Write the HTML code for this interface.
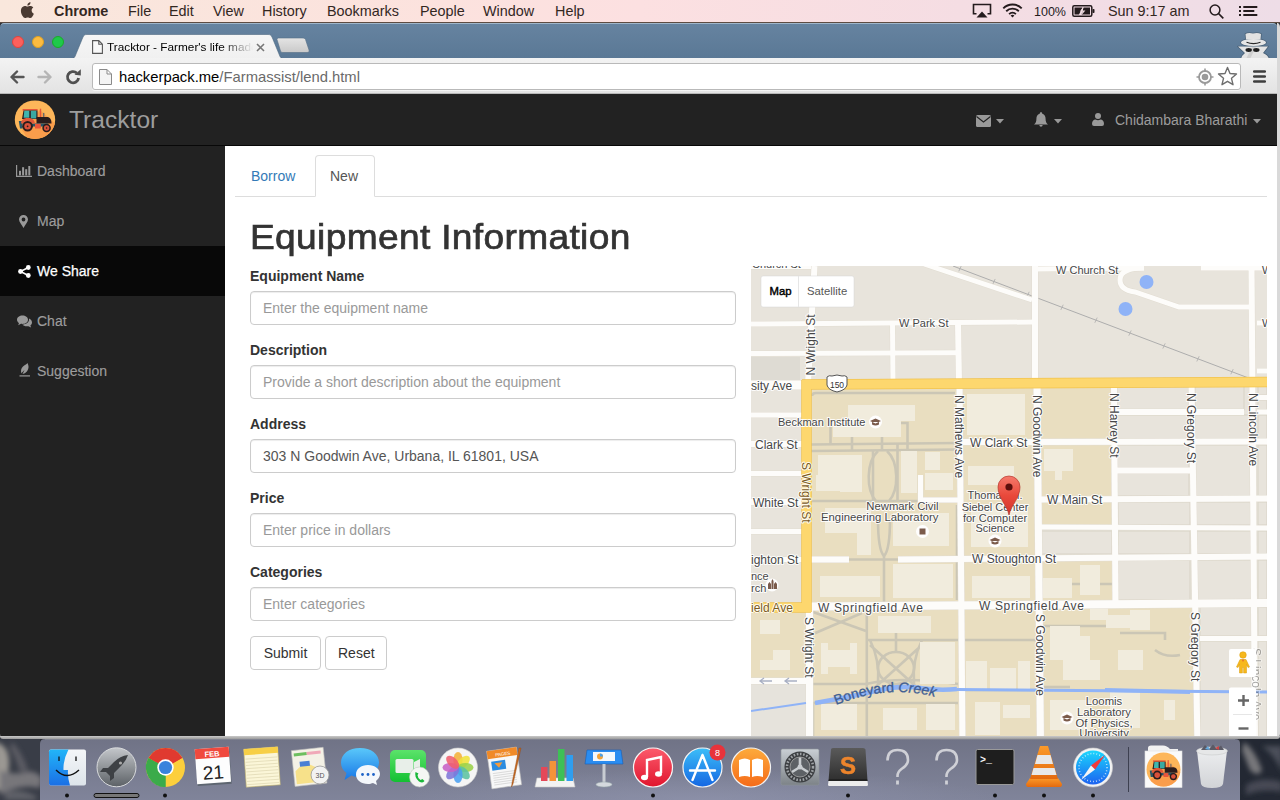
<!DOCTYPE html>
<html><head><meta charset="utf-8">
<style>
*{margin:0;padding:0;box-sizing:border-box}
html,body{width:1280px;height:800px;overflow:hidden;position:relative;font-family:"Liberation Sans",sans-serif}
body{background:#2b2f38}
.abs{position:absolute}
#desk{left:0;top:0;width:1280px;height:800px;background:
 radial-gradient(ellipse 30px 40px at 15px 770px,#8a8c90 0%,rgba(120,120,125,0) 100%),
 radial-gradient(ellipse 30px 30px at 1250px 760px,#5a5e66 0%,rgba(80,80,90,0) 100%),
 #2d3039}
#menubar{z-index:5;left:0;top:0;width:1280px;height:23px;background:linear-gradient(90deg,#f9e7dc 0%,#fce2de 35%,#fce0e1 50%,#f5dde3 75%,#eedde7 100%);border-bottom:1px solid #5e4c42}
.mb{position:absolute;top:3px;font-size:14.4px;line-height:16px;color:#33271f;white-space:nowrap}
#win{left:0;top:22px;width:1280px;height:717px;background:linear-gradient(90deg,#222 0,#222 1277px,#d9d9d9 1277px);border-radius:5px 5px 5px 5px;overflow:hidden}
#winbot{left:0;top:736px;width:1280px;height:3px;background:linear-gradient(#c9c9c9,#9c9c9c);border-radius:0 0 5px 5px}
#tabstrip{left:0;top:1px;width:1277px;height:36px;background:linear-gradient(#6683a0,#5a7895);border-top:1px solid #9fb6cb;border-radius:4px 4px 0 0}
#toolbar{left:0;top:36px;width:1277px;height:36px;background:linear-gradient(#f3f3f3,#e3e3e3);border-bottom:1px solid #b8b8b8}
#page{left:0;top:73px;width:1277px;height:641px;background:#fff;overflow:hidden}
.side{position:absolute;left:37px;font-size:14px;line-height:20px;color:#9d9d9d;white-space:nowrap;-webkit-text-stroke:0.15px #9d9d9d}
.lbl{position:absolute;left:250px;font-size:14px;line-height:20px;font-weight:bold;color:#333;white-space:nowrap}
.inp{position:absolute;left:250px;width:486px;height:34px;border:1px solid #ccc;border-radius:4px;padding:6px 12px;font-size:14px;line-height:20px;color:#555;white-space:nowrap;box-shadow:inset 0 1px 1px rgba(0,0,0,.075)}
.ph{color:#999}
.btn{position:absolute;top:541px;height:34px;border:1px solid #ccc;border-radius:4px;padding:6px 12px;font-size:14px;line-height:20px;color:#333;text-align:center;background:#fff}
</style></head><body>
<div id="desk" class="abs"></div>

<!-- MENU BAR -->
<div id="menubar" class="abs">
 <svg class="abs" style="left:20px;top:2px" width="14" height="16" viewBox="0 0 14 16"><path fill="#4a3a32" d="M11.6 8.5c0-2 1.6-2.9 1.7-3-1-1.4-2.4-1.6-2.9-1.6-1.2-.1-2.4.7-3 .7-.6 0-1.6-.7-2.6-.7C3.500 4 2.3 4.800 1.600 6c-1.4 2.400-.4 6 1 8 .7 1 1.500 2 2.500 2 1 0 1.400-.6 2.600-.6s1.500.6 2.600.6c1.100 0 1.800-1 2.400-2 .8-1.100 1.100-2.200 1.100-2.300 0 0-2.100-.8-2.200-3.200zM9.700 2.600C10.200 2 10.600 1.100 10.500.2 9.700.2 8.700.7 8.200 1.300c-.5.500-.9 1.400-.8 2.300.9.100 1.800-.4 2.300-1z"/></svg>
 <div class="mb" style="left:54px;font-weight:bold">Chrome</div>
 <div class="mb" style="left:128px">File</div>
 <div class="mb" style="left:169px">Edit</div>
 <div class="mb" style="left:213px">View</div>
 <div class="mb" style="left:262px">History</div>
 <div class="mb" style="left:327px">Bookmarks</div>
 <div class="mb" style="left:420px">People</div>
 <div class="mb" style="left:483px">Window</div>
 <div class="mb" style="left:555px">Help</div>
 <svg class="abs" style="left:972px;top:3px" width="20" height="16" viewBox="0 0 20 16"><path d="M4.5 10.8 H1.5 V1.5 H18.5 V10.8 H15.5" fill="none" stroke="#241b1d" stroke-width="1.6"/><path d="M4.5 14.5 L10 8.6 L15.5 14.5 Z" fill="#241b1d"/></svg>
 <svg class="abs" style="left:1002px;top:3px" width="21" height="15" viewBox="0 0 21 15"><path d="M1.3 5.3 A13 13 0 0 1 19.7 5.3 M4.2 8.2 A9 9 0 0 1 16.8 8.2 M7.1 11.1 A5 5 0 0 1 13.9 11.1" fill="none" stroke="#241b1d" stroke-width="1.9"/><path d="M10.5 14.5 L8.6 12.6 A2.7 2.7 0 0 1 12.4 12.6 Z" fill="#241b1d"/></svg>
 <div class="mb" style="left:1034px;top:4px;font-size:12.5px;color:#241b1d">100%</div>
 <svg class="abs" style="left:1072px;top:5px" width="23" height="12" viewBox="0 0 23 12"><rect x="0.8" y="0.8" width="19" height="10.4" rx="1.5" fill="none" stroke="#241b1d" stroke-width="1.5"/><path d="M2.5 2.5 H10.5 L7 9.5 H2.5 Z M11.5 2.5 H18 V9.5 H9.5 Z" fill="#241b1d"/><path d="M11.5 1.8 L7.8 6.6 H10.5 L9 10.4 L13.4 5.4 H10.6 Z" fill="#f0dde2"/><rect x="20.5" y="4" width="2" height="4" rx="0.8" fill="#241b1d"/></svg>
 <svg class="abs" style="left:1209px;top:4px" width="16" height="16" viewBox="0 0 16 16"><circle cx="6" cy="6" r="4.9" fill="none" stroke="#241b1d" stroke-width="1.5"/><path d="M9.5 9.5 L14.3 14.3" stroke="#241b1d" stroke-width="1.7"/></svg>
 <svg class="abs" style="left:1239px;top:5px" width="19" height="12" viewBox="0 0 19 12"><rect x="0" y="1" width="2" height="2" fill="#241b1d"/><rect x="0" y="5" width="2" height="2" fill="#241b1d"/><rect x="0" y="9" width="2" height="2" fill="#241b1d"/><rect x="4.3" y="1" width="14" height="2" fill="#241b1d"/><rect x="4.3" y="5" width="11" height="2" fill="#241b1d"/><rect x="4.3" y="9" width="14" height="2" fill="#241b1d"/></svg>
 <div class="mb" style="left:1108px">Sun 9:17 am</div>
</div>

<!-- WINDOW -->
<div id="win" class="abs">
 <div id="tabstrip" class="abs">
  <div class="abs" style="left:12px;top:12px;width:12px;height:12px;border-radius:50%;background:#fc605c;border:0.5px solid #e0443e"></div>
  <div class="abs" style="left:32px;top:12px;width:12px;height:12px;border-radius:50%;background:#fdbc40;border:0.5px solid #dea123"></div>
  <div class="abs" style="left:52px;top:12px;width:12px;height:12px;border-radius:50%;background:#1ec94a;border:0.5px solid #1aab29"></div>
  <svg class="abs" style="left:70px;top:10px" width="245" height="26" viewBox="0 0 245 26">
   <defs><linearGradient id="tabg" x1="0" y1="0" x2="0" y2="1"><stop offset="0" stop-color="#f6f6f6"/><stop offset="1" stop-color="#f0f0f0"/></linearGradient>
   <linearGradient id="ntg" x1="0" y1="0" x2="0" y2="1"><stop offset="0" stop-color="#e4e4e4"/><stop offset="1" stop-color="#c9c9c9"/></linearGradient></defs>
   <path d="M0 25 C4 25 5 23 6 20 L13 3 C14 1 15 0.5 17 0.5 L198 0.5 C200 0.5 201 1 202 3 L209 20 C210 23 211 25 215 25 Z" fill="url(#tabg)" stroke="#4f6a82" stroke-width="0.6"/>
   <path d="M207 5.5 C207 4.5 208 4 209 4 L232 4 C234 4 235 4.5 235.5 5.5 L239 16 C239.5 17.5 239 18.5 237 18.5 L213 18.5 C211.5 18.5 211 18 210.5 17 Z" fill="url(#ntg)" stroke="#566f86" stroke-width="0.6"/>
  </svg>
  <svg class="abs" style="left:91.5px;top:16px" width="11" height="14" viewBox="0 0 11 14"><path d="M0.6 0.6 H6.8 L10.4 4.2 V13.4 H0.6 Z M6.8 0.6 V4.2 H10.4" fill="#f8f8f8" stroke="#555" stroke-width="1.1"/></svg>
  <div class="abs" style="left:107px;top:15px;width:146px;height:16px;overflow:hidden;font-size:11.8px;line-height:16px;color:#000;white-space:nowrap;-webkit-mask-image:linear-gradient(90deg,#000 78%,transparent 100%)">Tracktor - Farmer's life made easy</div>
  <svg class="abs" style="left:256px;top:19px" width="9" height="9" viewBox="0 0 9 9"><path d="M1 1 L8 8 M8 1 L1 8" stroke="#777" stroke-width="1.6"/></svg>
  <svg class="abs" style="left:1236px;top:5px" width="36" height="31" viewBox="1236 28 36 31">
   <g stroke="#3b4d5e" stroke-width="1.6" stroke-linejoin="round" fill="#3b4d5e" opacity="0.55">
    <path d="M1246 38.5 L1245.5 33 Q1248 31.5 1253 32.5 Q1258 31.5 1261 33 L1260.5 38.5 Z"/><ellipse cx="1253.5" cy="41.5" rx="12.5" ry="3.5"/>
    <path d="M1238 45.5 L1268 45.5 L1263 52 Q1268 54 1269 58 L1241 58 Q1242 54 1245 52 Z"/></g>
   <path d="M1246 38.5 L1245.5 33 Q1248 31.5 1253 32.5 Q1258 31.5 1261 33 L1260.5 38.5 Z" fill="#e2e2e2"/>
   <ellipse cx="1253.5" cy="41.5" rx="12.5" ry="3.5" fill="#e6e6e6"/>
   <path d="M1246.5 41.2 Q1253.5 44 1260.5 41.2" fill="none" stroke="#2a2a2a" stroke-width="1.1"/>
   <path d="M1238 45.5 L1268 45.5 L1263 52 Q1268 54 1269 58 L1241 58 Q1242 54 1245 52 Z" fill="#e4e4e4"/>
   <path d="M1252 46 L1256 46 L1250 58 L1246 58 Z" fill="#cfcfcf"/>
   <ellipse cx="1248.7" cy="49" rx="3.2" ry="1.9" fill="#1e1e1e"/><ellipse cx="1256.3" cy="49" rx="3.2" ry="1.9" fill="#1e1e1e"/>
  </svg>
 </div>
 <div id="toolbar" class="abs">
  <svg class="abs" style="left:9px;top:12px" width="16" height="14" viewBox="0 0 16 14"><path d="M14.5 7 H3 M8 1.5 L2.5 7 L8 12.5" fill="none" stroke="#555" stroke-width="2.4" stroke-linecap="round" stroke-linejoin="round"/></svg>
  <svg class="abs" style="left:37px;top:12px" width="16" height="14" viewBox="0 0 16 14"><path d="M1.5 7 H13 M8 1.5 L13.5 7 L8 12.5" fill="none" stroke="#b5b5b5" stroke-width="2.4" stroke-linecap="round" stroke-linejoin="round"/></svg>
  <svg class="abs" style="left:65px;top:10px" width="17" height="17" viewBox="0 0 17 17"><path d="M13.6 10 A5.6 5.6 0 1 1 11.8 5" fill="none" stroke="#505050" stroke-width="2.8"/><path d="M9.5 6.8 L15.8 1.2 L15.8 7.6 Z" fill="#505050"/></svg>
  <div class="abs" style="left:92px;top:5px;width:1149px;height:27px;background:#fff;border:1px solid #b9b9b9;border-radius:3px;box-shadow:0 1px 0 rgba(255,255,255,.6)"></div>
  <svg class="abs" style="left:99px;top:11px" width="13" height="16" viewBox="0 0 13 16"><path d="M0.5 0.5 H8 L12.5 5 V15.5 H0.5 Z M8 0.5 V5 H12.5" fill="#f4f4f4" stroke="#8a8a8a" stroke-width="1"/></svg>
  <div class="abs" style="left:119px;top:10px;font-size:14.8px;line-height:18px;color:#000;white-space:nowrap">hackerpack.me<span style="color:#6a6a6a">/Farmassist/lend.html</span></div>
  <svg class="abs" style="left:1196px;top:10px" width="18" height="18" viewBox="0 0 18 18"><circle cx="9" cy="9" r="6" fill="none" stroke="#9a9a9a" stroke-width="1.8"/><circle cx="9" cy="9" r="3.3" fill="#9a9a9a"/><path d="M9 0.5V3M9 15V17.5M0.5 9H3M15 9H17.5" stroke="#9a9a9a" stroke-width="1.6"/></svg>
  <svg class="abs" style="left:1217px;top:8px" width="21" height="20" viewBox="0 0 21 20"><path d="M10.5 1.5 L13 7.5 L19.5 8 L14.5 12.3 L16 18.7 L10.5 15.3 L5 18.7 L6.5 12.3 L1.5 8 L8 7.5 Z" fill="#fff" stroke="#6e6e6e" stroke-width="1.4" stroke-linejoin="round"/></svg>
  <svg class="abs" style="left:1252px;top:11px" width="15" height="15" viewBox="0 0 15 15"><path d="M2.2 2.5H12.8M2.2 7.5H12.8M2.2 12.5H12.8" stroke="#3e3e3e" stroke-width="2.5" stroke-linecap="round"/></svg>
 </div>
 <div id="page" class="abs">
  <!-- navbar -->
  <div class="abs" style="left:0;top:0;width:1277px;height:51px;background:#222;border-bottom:1px solid #080808"></div>
  <svg class="abs" style="left:10px;top:3px" width="50" height="44" viewBox="0 0 50 44">
   <defs><clipPath id="lc"><ellipse cx="25" cy="21.7" rx="20.2" ry="19.3"/></clipPath></defs>
   <ellipse cx="25" cy="21.7" rx="20.2" ry="19.3" fill="#fdb65a"/>
   <g clip-path="url(#lc)"><path d="M30 12 L50 30 L50 44 L20 44 L12 32 Z" fill="#fa9d4b"/></g>
   <rect x="12.6" y="11" width="15" height="1.6" fill="#e8553a"/>
   <path d="M13.5 12.5 L27.5 12.5 L27.5 21 L12 21 Z" fill="#2a1c1c"/>
   <path d="M14.3 12.8 H19.3 V19.8 H13.6 Z" fill="#3fb6ae"/>
   <path d="M20.8 12.8 H26.4 V20.5 H20.8 Z" fill="#3aa9a2"/>
   <rect x="29.8" y="10.7" width="1.4" height="8.5" fill="#e8553a"/>
   <rect x="33" y="14.9" width="1.4" height="4" fill="#6b6b6b"/>
   <path d="M26.5 19 H37 C40 19 41.5 21.5 41.5 25.6 H26.5 Z" fill="#2b1c1c"/>
   <path d="M8.8 23 L12.6 23 L12.6 30.5 L10 30.5 Z" fill="#26566a"/>
   <path d="M22 25.5 H38 V28.6 H22 Z" fill="#25566a"/>
   <rect x="25" y="25.9" width="5.8" height="4.6" fill="#e8553a"/>
   <path d="M11 25.5 C11 21.5 14 20 18 20 C22 20 24.8 22 24.8 25.5 Z" fill="#e05a3a"/>
   <circle cx="17.6" cy="28.3" r="5.3" fill="#2a1c1c"/><circle cx="17.6" cy="28.3" r="3.3" fill="#d9503a"/><circle cx="17.6" cy="28.3" r="0.9" fill="#2a1c1c"/>
   <circle cx="36.6" cy="30" r="4.3" fill="#2a1c1c"/><circle cx="36.6" cy="30" r="2.7" fill="#d9503a"/><circle cx="36.6" cy="30" r="0.8" fill="#2a1c1c"/>
  </svg>
  <div class="abs" style="left:69px;top:11px;font-size:24.6px;line-height:28px;color:#9d9d9d;white-space:nowrap">Tracktor</div>
  <svg class="abs" style="left:976px;top:20px" width="15" height="12" viewBox="0 0 15 12" preserveAspectRatio="none"><path d="M1.5 0 H13.5 Q15 0 15 1.5 V10.5 Q15 12 13.5 12 H1.5 Q0 12 0 10.5 V1.5 Q0 0 1.5 0 Z" fill="#999"/><path d="M0.5 1.5 L7.5 7 L14.5 1.5" fill="none" stroke="#222" stroke-width="1.1"/></svg>
  <svg class="abs" style="left:996px;top:24px" width="8" height="5" viewBox="0 0 8 5"><path d="M0 0 H8 L4 4.5 Z" fill="#999"/></svg>
  <svg class="abs" style="left:1034px;top:17px" width="14" height="15" viewBox="0 0 14 15"><path d="M7 0.3 C8 0.3 8.3 1 8.3 1.7 C10.8 2.3 11.6 4.5 11.6 7 C11.6 9.8 12.3 11 14 12.5 H0 C1.7 11 2.4 9.8 2.4 7 C2.4 4.5 3.2 2.3 5.7 1.7 C5.7 1 6 0.3 7 0.3 Z M5.4 13 H8.6 C8.6 14 7.9 14.7 7 14.7 C6.1 14.7 5.4 14 5.4 13 Z" fill="#999"/></svg>
  <svg class="abs" style="left:1054px;top:24px" width="8" height="5" viewBox="0 0 8 5"><path d="M0 0 H8 L4 4.5 Z" fill="#999"/></svg>
  <svg class="abs" style="left:1092px;top:18px" width="12" height="13" viewBox="0 0 12 13"><circle cx="6" cy="3" r="3" fill="#999"/><path d="M0 11 C0 8 1.5 6.5 3.5 6.5 Q6 8 8.5 6.5 C10.5 6.5 12 8 12 11 Q12 13 10 13 H2 Q0 13 0 11 Z" fill="#999"/></svg>
  <div class="abs" style="left:1115px;top:15px;font-size:14px;line-height:20px;color:#9d9d9d;white-space:nowrap">Chidambara Bharathi</div>
  <svg class="abs" style="left:1253px;top:24px" width="8" height="5" viewBox="0 0 8 5"><path d="M0 0 H8 L4 4.5 Z" fill="#999"/></svg>

  <!-- sidebar -->
  <div class="abs" style="left:0;top:51px;width:225px;height:600px;background:#222"></div>
  <div class="abs" style="left:0;top:151px;width:225px;height:50px;background:#080808"></div>
  <div class="side" style="top:66px">Dashboard</div>
  <div class="side" style="top:116px">Map</div>
  <div class="side" style="top:166px;color:#fff;-webkit-text-stroke:0.25px #fff">We Share</div>
  <div class="side" style="top:216px">Chat</div>
  <div class="side" style="top:266px">Suggestion</div>
  <svg class="abs" style="left:16px;top:70px" width="16" height="12" viewBox="0 0 16 12"><path d="M0.6 0 V11.4 H16" fill="none" stroke="#999" stroke-width="1.2"/><rect x="3" y="5.8" width="2" height="4.6" fill="#999"/><rect x="6.1" y="2.2" width="2" height="8.2" fill="#999"/><rect x="9.2" y="4.2" width="2" height="6.2" fill="#999"/><rect x="12.3" y="1" width="2" height="9.4" fill="#999"/></svg>
  <svg class="abs" style="left:19px;top:120px" width="9" height="13" viewBox="0 0 9 13"><path d="M4.5 0 C7 0 9 2 9 4.5 C9 7 6 10 4.5 13 C3 10 0 7 0 4.5 C0 2 2 0 4.5 0 Z M4.5 2.6 A1.9 1.9 0 1 0 4.5 6.4 A1.9 1.9 0 1 0 4.5 2.6 Z" fill="#999" fill-rule="evenodd"/></svg>
  <svg class="abs" style="left:18px;top:170px" width="13" height="13" viewBox="0 0 13 13"><circle cx="10.3" cy="2.5" r="2.4" fill="#fff"/><circle cx="2.5" cy="6.5" r="2.4" fill="#fff"/><circle cx="10.3" cy="10.5" r="2.4" fill="#fff"/><path d="M10.3 2.5 L2.5 6.5 L10.3 10.5" fill="none" stroke="#fff" stroke-width="1.5"/></svg>
  <svg class="abs" style="left:17px;top:220px" width="15" height="13" viewBox="0 0 15 13"><path d="M5.5 0.5 C8.5 0.5 11 2.3 11 4.7 C11 7.1 8.5 8.9 5.5 8.9 C5 8.9 4.5 8.9 4 8.8 L1.2 10.3 L2 8 C0.8 7.2 0 6 0 4.7 C0 2.3 2.5 0.5 5.5 0.5 Z" fill="#999"/><path d="M12 3.6 C13.8 4.4 15 5.8 15 7.4 C15 8.6 14.4 9.6 13.4 10.3 L14 12.6 L11.4 11.2 C10.9 11.3 10.4 11.3 9.9 11.3 C7.9 11.3 6.2 10.6 5.3 9.5 C9 9.4 12 7.3 12 4.7 Z" fill="#999"/></svg>
  <svg class="abs" style="left:18px;top:268px" width="13" height="14" viewBox="0 0 13 14"><path d="M9.5 0 C10.5 2.5 11 4 10 6.5 C9 9 7 10.5 4.5 11 C5 9.5 6 8.2 6.5 7 C5.5 8 4 9.2 3.5 10.5 C2.5 8 3 5.5 5 3.5 C6.5 2 8.5 1.5 9.5 0 Z" fill="#999"/><rect x="1.5" y="12.3" width="10.5" height="1.2" fill="#999"/></svg>

  <!-- content -->
  <div class="abs" style="left:225px;top:51px;width:1052px;height:600px;background:#fff"></div>
  <div class="abs" style="left:235px;top:101px;width:1032px;height:1px;background:#ddd"></div>
  <div class="abs" style="left:315px;top:60px;width:60px;height:42px;background:#fff;border:1px solid #ddd;border-bottom-color:transparent;border-radius:4px 4px 0 0"></div>
  <div class="abs" style="left:251px;top:71px;font-size:14px;line-height:20px;color:#337ab7">Borrow</div>
  <div class="abs" style="left:330px;top:71px;font-size:14px;line-height:20px;color:#555">New</div>
  <div class="abs" style="left:250px;top:122px;font-size:35px;line-height:40px;color:#333;white-space:nowrap;letter-spacing:0.3px;-webkit-text-stroke:0.7px #333;transform:scaleX(1.062);transform-origin:0 0">Equipment Information</div>

  <div class="lbl" style="top:171px">Equipment Name</div>
  <div class="inp" style="top:196px"><span class="ph">Enter the equipment name</span></div>
  <div class="lbl" style="top:245px">Description</div>
  <div class="inp" style="top:270px"><span class="ph">Provide a short description about the equipment</span></div>
  <div class="lbl" style="top:319px">Address</div>
  <div class="inp" style="top:344px"><span style="color:#555">303 N Goodwin Ave, Urbana, IL 61801, USA</span></div>
  <div class="lbl" style="top:393px">Price</div>
  <div class="inp" style="top:418px"><span class="ph">Enter price in dollars</span></div>
  <div class="lbl" style="top:467px">Categories</div>
  <div class="inp" style="top:492px"><span class="ph">Enter categories</span></div>
  <div class="btn" style="left:250px;width:71px">Submit</div>
  <div class="btn" style="left:325px;width:62px">Reset</div>

  <div id="map" class="abs" style="left:751px;top:171px;width:516px;height:480px;background:#e8e4dc;overflow:hidden">
<svg class="abs" style="left:0;top:0" width="516" height="480" viewBox="751 266 516 480" font-family="Liberation Sans, sans-serif">
<rect x="751" y="266" width="516" height="480" fill="#e8e4dc"/>
<path d="M806 385 L1114 383 L1115.5 605 L1196 603 L1199 746 L751 746 L751 608 L806 608 Z" fill="#e9dec0"/>
<rect x="1040" y="529" width="76" height="28" fill="#e8e4dc"/>
<rect x="751" y="683" width="56" height="63" fill="#e6e3dc"/>
<rect x="1117" y="386" width="72" height="24" fill="none" stroke="#d8d3c6" stroke-width="1"/>
<rect x="1195" y="386" width="49" height="24" fill="none" stroke="#d8d3c6" stroke-width="1"/>
<rect x="1117" y="415" width="72" height="24" fill="none" stroke="#d8d3c6" stroke-width="1"/>
<rect x="1195" y="415" width="57" height="24" fill="none" stroke="#d8d3c6" stroke-width="1"/>
<rect x="1117" y="445" width="72" height="23" fill="none" stroke="#d8d3c6" stroke-width="1"/>
<rect x="1195" y="445" width="57" height="51" fill="none" stroke="#d8d3c6" stroke-width="1"/>
<rect x="1117" y="473" width="72" height="23" fill="none" stroke="#d8d3c6" stroke-width="1"/>
<rect x="1118" y="502" width="72" height="23" fill="none" stroke="#d8d3c6" stroke-width="1"/>
<rect x="1196" y="502" width="56" height="23" fill="none" stroke="#d8d3c6" stroke-width="1"/>
<rect x="1118" y="531" width="72" height="23" fill="none" stroke="#d8d3c6" stroke-width="1"/>
<rect x="1196" y="531" width="56" height="23" fill="none" stroke="#d8d3c6" stroke-width="1"/>
<rect x="1118" y="560" width="72" height="40" fill="none" stroke="#d8d3c6" stroke-width="1"/>
<rect x="1196" y="560" width="56" height="40" fill="none" stroke="#d8d3c6" stroke-width="1"/>
<rect x="1200" y="607" width="52" height="29" fill="none" stroke="#d8d3c6" stroke-width="1"/>
<rect x="1200" y="641" width="52" height="105" fill="none" stroke="#d8d3c6" stroke-width="1"/>
<rect x="1258" y="386" width="9" height="9" fill="none" stroke="#d8d3c6" stroke-width="1"/>
<rect x="1258" y="400" width="9" height="10" fill="none" stroke="#d8d3c6" stroke-width="1"/>
<rect x="1258" y="415" width="9" height="24" fill="none" stroke="#d8d3c6" stroke-width="1"/>
<rect x="1258" y="445" width="9" height="51" fill="none" stroke="#d8d3c6" stroke-width="1"/>
<rect x="1258" y="502" width="9" height="23" fill="none" stroke="#d8d3c6" stroke-width="1"/>
<rect x="1258" y="531" width="9" height="23" fill="none" stroke="#d8d3c6" stroke-width="1"/>
<rect x="1258" y="560" width="9" height="40" fill="none" stroke="#d8d3c6" stroke-width="1"/>
<rect x="1258" y="607" width="9" height="29" fill="none" stroke="#d8d3c6" stroke-width="1"/>
<rect x="1258" y="641" width="9" height="105" fill="none" stroke="#d8d3c6" stroke-width="1"/>
<rect x="1040" y="531" width="72" height="23" fill="none" stroke="#d8d3c6" stroke-width="1"/>
<rect x="751" y="357" width="49" height="23" fill="#dedbd3"/>
<path d="M816 393 L955 393" fill="none" stroke="#cbc6b5" stroke-width="2.6"/>
<path d="M816 393 Q812 393 812 396" fill="none" stroke="#cbc6b5" stroke-width="2.6"/>
<path d="M811 444.5 L958 443" fill="none" stroke="#cbc6b5" stroke-width="2.6"/>
<path d="M811 451 L958 449.5" fill="none" stroke="#cbc6b5" stroke-width="2.6"/>
<path d="M830.5 420 V444" fill="none" stroke="#cbc6b5" stroke-width="2.6"/>
<path d="M852 437 V451" fill="none" stroke="#cbc6b5" stroke-width="2.6"/>
<path d="M882 437 V451" fill="none" stroke="#cbc6b5" stroke-width="2.6"/>
<path d="M900 423 H907.5 V451" fill="none" stroke="#cbc6b5" stroke-width="2.6"/>
<path d="M878 451 C866 462 866 490 876 501" fill="none" stroke="#cbc6b5" stroke-width="2.6"/>
<path d="M887 451 C899 462 899 490 889 501" fill="none" stroke="#cbc6b5" stroke-width="2.6"/>
<path d="M873 451 V501" fill="none" stroke="#cbc6b5" stroke-width="2.6"/>
<path d="M897.5 444 V501" fill="none" stroke="#cbc6b5" stroke-width="2.6"/>
<path d="M811 501 L920 501" fill="none" stroke="#cbc6b5" stroke-width="2.6"/>
<path d="M878 519 C878 540 880 552 884 556 C888 552 890 540 890 519" fill="none" stroke="#cbc6b5" stroke-width="2.6"/>
<path d="M849 559.5 L898 559.5" fill="none" stroke="#cbc6b5" stroke-width="2.6"/>
<path d="M884 556 V612" fill="none" stroke="#cbc6b5" stroke-width="2.6"/>
<path d="M957 505 V600" fill="none" stroke="#cbc6b5" stroke-width="2.6"/>
<path d="M813 612 L866 631" fill="none" stroke="#cbc6b5" stroke-width="2.6"/>
<path d="M813 634 L862 613" fill="none" stroke="#cbc6b5" stroke-width="2.6"/>
<path d="M866.8 612 V746" fill="none" stroke="#cbc6b5" stroke-width="2.6"/>
<path d="M866 640 L958 640" fill="none" stroke="#cbc6b5" stroke-width="2.6"/>
<path d="M866 684 Q900 676 958 684" fill="none" stroke="#cbc6b5" stroke-width="2.6"/>
<path d="M813 703 L958 703" fill="none" stroke="#cbc6b5" stroke-width="2.6"/>
<path d="M813 684 L866 684" fill="none" stroke="#cbc6b5" stroke-width="2.6"/>
<path d="M813 746 V703" fill="none" stroke="#cbc6b5" stroke-width="2.6"/>
<path d="M1043 584 H1112" fill="none" stroke="#cbc6b5" stroke-width="2.6"/>
<path d="M1043 626 H1112" fill="none" stroke="#cbc6b5" stroke-width="2.6"/>
<path d="M1043 687 H1070" fill="none" stroke="#cbc6b5" stroke-width="2.6"/>
<path d="M965 640 L1036 640" fill="none" stroke="#cbc6b5" stroke-width="2.6"/>
<path d="M965 690 L1036 690" fill="none" stroke="#cbc6b5" stroke-width="2.6"/>
<path d="M1120 633 L1165 633 L1165 640" fill="none" stroke="#cbc6b5" stroke-width="2.6"/>
<path d="M1155 650 Q1165 658 1180 655" fill="none" stroke="#cbc6b5" stroke-width="2.6"/>
<ellipse cx="896" cy="668" rx="18" ry="16" fill="none" stroke="#cbc6b5" stroke-width="2.6"/>
<path d="M870 645 L922 692 M922 645 L870 692 M870 640 Q880 660 878 684 M922 640 Q912 660 914 684 M896 633 V652" fill="none" stroke="#cbc6b5" stroke-width="2.6"/>
<path d="M848 405 H915 V421 H901 V437 H833 V421 H848 Z" fill="#f1ecdd"/>
<path d="M818 455 H862 V492 H840 V476 H818 Z" fill="#f1ecdd"/>
<path d="M816 475 H862 V491 H816 Z" fill="#f1ecdd"/>
<path d="M901 451 H917 V493 H901 Z" fill="#f1ecdd"/>
<path d="M925 452 H940 V470 H925 Z" fill="#f1ecdd"/>
<path d="M925 473 H953 V490 H925 Z" fill="#f1ecdd"/>
<path d="M967 394 H1025 V435 H967 Z" fill="#f1ecdd"/>
<path d="M1044 449 H1073 V471 H1062 V480 H1055 V471 H1044 Z" fill="#f1ecdd"/>
<path d="M968 466 H1014 V485 H968 Z" fill="#f1ecdd"/>
<path d="M971 504 H1028 V547 H971 Z" fill="#f1ecdd"/>
<path d="M893 513 H949 V546 H893 Z" fill="#f1ecdd"/>
<path d="M825 508 H871 V555 H857 V533 H825 Z" fill="#f1ecdd"/>
<path d="M820 576 H880 V597 H820 Z" fill="#f1ecdd"/>
<path d="M893 564 H953 V598 H893 Z" fill="#f1ecdd"/>
<path d="M878 616 H931 V633 H878 Z" fill="#f1ecdd"/>
<path d="M821 643 H828 V650 H850 V643 H857 V674 H850 V667 H828 V674 H821 Z" fill="#f1ecdd"/>
<path d="M920 642 H955 V684 H920 Z" fill="#f1ecdd"/>
<path d="M821 704 H857 V730 H821 Z" fill="#f1ecdd"/>
<path d="M883 708 H917 V730 H883 Z" fill="#f1ecdd"/>
<path d="M926 704 H955 V730 H926 Z" fill="#f1ecdd"/>
<path d="M972 576 H1030 V598 H972 Z" fill="#f1ecdd"/>
<path d="M966 661 H987 V690 H966 Z" fill="#f1ecdd"/>
<path d="M990 668 H1016 V690 H990 Z" fill="#f1ecdd"/>
<path d="M1018 661 H1030 V690 H1018 Z" fill="#f1ecdd"/>
<path d="M975 702 H1000 V735 H975 Z" fill="#f1ecdd"/>
<path d="M1003 705 H1030 V718 H1003 Z" fill="#f1ecdd"/>
<path d="M1050 626 H1080 V640 H1063 V660 H1050 Z" fill="#f1ecdd"/>
<path d="M1063 636 H1090 V680 H1063 Z" fill="#f1ecdd"/>
<path d="M1050 700 H1090 V730 H1050 Z" fill="#f1ecdd"/>
<path d="M1110 690 H1140 V728 H1110 Z" fill="#f1ecdd"/>
<path d="M1106 615 H1143 V628 H1106 Z" fill="#f1ecdd"/>
<path d="M1130 610 H1150 V630 H1130 Z" fill="#f1ecdd"/>
<path d="M1118 650 H1143 V670 H1118 Z" fill="#f1ecdd"/>
<path d="M1090 660 H1100 V680 H1090 Z" fill="#f1ecdd"/>
<path d="M1090 605 H1108 V620 H1090 Z" fill="#f1ecdd"/>
<path d="M1164 700 H1175 V720 H1164 Z" fill="#f1ecdd"/>
<path d="M760 620 H780 V634 H760 Z" fill="#f1ecdd"/>
<path d="M773 650 H790 V670 H773 Z" fill="#f1ecdd"/>
<path d="M760 660 H785 V670 H760 Z" fill="#f1ecdd"/>
<path d="M1080 565 H1100 V595 H1080 Z" fill="#f1ecdd"/>
<path d="M1042 578 H1072 V598 H1042 Z" fill="#f1ecdd"/>
<circle cx="1146.5" cy="282" r="7" fill="#8fb3f7"/>
<circle cx="1125.5" cy="309" r="7" fill="#8fb3f7"/>
<path d="M953 266 L1267 385" stroke="#adadad" stroke-width="1"/>
<path d="M958.8 271.25300000000004 L961.2 266.053" stroke="#adadad" stroke-width="0.8"/>
<path d="M992.8 284.139 L995.2 278.93899999999996" stroke="#adadad" stroke-width="0.8"/>
<path d="M1026.8 297.02500000000003 L1029.2 291.825" stroke="#adadad" stroke-width="0.8"/>
<path d="M1060.8 309.911 L1063.2 304.71099999999996" stroke="#adadad" stroke-width="0.8"/>
<path d="M1094.8 322.797 L1097.2 317.597" stroke="#adadad" stroke-width="0.8"/>
<path d="M1128.8 335.683 L1131.2 330.48299999999995" stroke="#adadad" stroke-width="0.8"/>
<path d="M1162.8 348.569 L1165.2 343.36899999999997" stroke="#adadad" stroke-width="0.8"/>
<path d="M1196.8 361.45500000000004 L1199.2 356.255" stroke="#adadad" stroke-width="0.8"/>
<path d="M1230.8 374.341 L1233.2 369.14099999999996" stroke="#adadad" stroke-width="0.8"/>
<path d="M814.5 266 L808 384" fill="none" stroke="#e2ddd2" stroke-width="7" stroke-linecap="butt"/>
<path d="M892.5 322 L893 384" fill="none" stroke="#e2ddd2" stroke-width="6" stroke-linecap="butt"/>
<path d="M958 322 L959 384" fill="none" stroke="#e2ddd2" stroke-width="7" stroke-linecap="butt"/>
<path d="M1035 266 L1035 384" fill="none" stroke="#e2ddd2" stroke-width="7" stroke-linecap="butt"/>
<path d="M924 264 L1032 300" fill="none" stroke="#e2ddd2" stroke-width="6" stroke-linecap="butt"/>
<path d="M959.5 384 L962.5 746" fill="none" stroke="#e2ddd2" stroke-width="7" stroke-linecap="butt"/>
<path d="M1037 384 L1040.5 746" fill="none" stroke="#e2ddd2" stroke-width="8" stroke-linecap="butt"/>
<path d="M1114 384 L1115.5 605" fill="none" stroke="#e2ddd2" stroke-width="7" stroke-linecap="butt"/>
<path d="M1191.5 384 L1197.5 746" fill="none" stroke="#e2ddd2" stroke-width="7" stroke-linecap="butt"/>
<path d="M1251.5 266 L1255 746" fill="none" stroke="#e2ddd2" stroke-width="7" stroke-linecap="butt"/>
<path d="M809.5 608 L809.5 746" fill="none" stroke="#e2ddd2" stroke-width="8" stroke-linecap="butt"/>
<path d="M920.5 475 V500 H958" fill="none" stroke="#e2ddd2" stroke-width="6" stroke-linecap="butt"/>
<path d="M751 266.5 L811 266.5" fill="none" stroke="#e2ddd2" stroke-width="6" stroke-linecap="butt"/>
<path d="M1038 269 L1144 268" fill="none" stroke="#e2ddd2" stroke-width="6" stroke-linecap="butt"/>
<path d="M1144 268 Q1120 268 1120 280 Q1120 290 1135 292 L1179 307 L1249 307" fill="none" stroke="#e2ddd2" stroke-width="6" stroke-linecap="butt"/>
<path d="M1201 268 L1267 268" fill="none" stroke="#e2ddd2" stroke-width="6" stroke-linecap="butt"/>
<path d="M751 324 L1035 322" fill="none" stroke="#e2ddd2" stroke-width="6" stroke-linecap="butt"/>
<path d="M751 353.5 L958 352.7" fill="none" stroke="#e2ddd2" stroke-width="6" stroke-linecap="butt"/>
<path d="M751 385 L803 385" fill="none" stroke="#e2ddd2" stroke-width="10" stroke-linecap="butt"/>
<path d="M751 415 L802 415" fill="none" stroke="#e2ddd2" stroke-width="6" stroke-linecap="butt"/>
<path d="M751 444 L802 444" fill="none" stroke="#e2ddd2" stroke-width="7" stroke-linecap="butt"/>
<path d="M751 473.5 L802 473.5" fill="none" stroke="#e2ddd2" stroke-width="6" stroke-linecap="butt"/>
<path d="M751 502 L802 502" fill="none" stroke="#e2ddd2" stroke-width="7" stroke-linecap="butt"/>
<path d="M751 531.5 L802 531.5" fill="none" stroke="#e2ddd2" stroke-width="6" stroke-linecap="butt"/>
<path d="M751 559.5 L802 559.5" fill="none" stroke="#e2ddd2" stroke-width="6" stroke-linecap="butt"/>
<path d="M962 442 L1267 441.5" fill="none" stroke="#e2ddd2" stroke-width="7" stroke-linecap="butt"/>
<path d="M1117 412 L1244 412" fill="none" stroke="#e2ddd2" stroke-width="7" stroke-linecap="butt"/>
<path d="M1257 397.5 L1267 397.5" fill="none" stroke="#e2ddd2" stroke-width="6" stroke-linecap="butt"/>
<path d="M1257 412 L1267 412" fill="none" stroke="#e2ddd2" stroke-width="6" stroke-linecap="butt"/>
<path d="M1117 470.5 L1192 470.5" fill="none" stroke="#e2ddd2" stroke-width="7" stroke-linecap="butt"/>
<path d="M1040 499.5 L1267 498.5" fill="none" stroke="#e2ddd2" stroke-width="7" stroke-linecap="butt"/>
<path d="M1040 527 L1267 528" fill="none" stroke="#e2ddd2" stroke-width="6" stroke-linecap="butt"/>
<path d="M811 559.5 L849 559.5" fill="none" stroke="#e2ddd2" stroke-width="7" stroke-linecap="butt"/>
<path d="M898 559.5 L1267 556.5" fill="none" stroke="#e2ddd2" stroke-width="7" stroke-linecap="butt"/>
<path d="M811 606.5 L1267 603" fill="none" stroke="#e2ddd2" stroke-width="9" stroke-linecap="butt"/>
<path d="M1200 638.5 L1267 638.5" fill="none" stroke="#e2ddd2" stroke-width="6" stroke-linecap="butt"/>
<path d="M751 681 L806 681" fill="none" stroke="#e2ddd2" stroke-width="7" stroke-linecap="butt"/>
<path d="M1257 323 L1267 323" fill="none" stroke="#e2ddd2" stroke-width="6" stroke-linecap="butt"/>
<path d="M1257 371 L1267 371" fill="none" stroke="#e2ddd2" stroke-width="6" stroke-linecap="butt"/>
<path d="M814.5 266 L808 384" fill="none" stroke="#fdfcfa" stroke-width="6" stroke-linecap="butt"/>
<path d="M892.5 322 L893 384" fill="none" stroke="#fdfcfa" stroke-width="5" stroke-linecap="butt"/>
<path d="M958 322 L959 384" fill="none" stroke="#fdfcfa" stroke-width="6" stroke-linecap="butt"/>
<path d="M1035 266 L1035 384" fill="none" stroke="#fdfcfa" stroke-width="6" stroke-linecap="butt"/>
<path d="M924 264 L1032 300" fill="none" stroke="#fdfcfa" stroke-width="5" stroke-linecap="butt"/>
<path d="M959.5 384 L962.5 746" fill="none" stroke="#fdfcfa" stroke-width="6" stroke-linecap="butt"/>
<path d="M1037 384 L1040.5 746" fill="none" stroke="#fdfcfa" stroke-width="7" stroke-linecap="butt"/>
<path d="M1114 384 L1115.5 605" fill="none" stroke="#fdfcfa" stroke-width="6" stroke-linecap="butt"/>
<path d="M1191.5 384 L1197.5 746" fill="none" stroke="#fdfcfa" stroke-width="6" stroke-linecap="butt"/>
<path d="M1251.5 266 L1255 746" fill="none" stroke="#fdfcfa" stroke-width="6" stroke-linecap="butt"/>
<path d="M809.5 608 L809.5 746" fill="none" stroke="#fdfcfa" stroke-width="7" stroke-linecap="butt"/>
<path d="M920.5 475 V500 H958" fill="none" stroke="#fdfcfa" stroke-width="5" stroke-linecap="butt"/>
<path d="M751 266.5 L811 266.5" fill="none" stroke="#fdfcfa" stroke-width="5" stroke-linecap="butt"/>
<path d="M1038 269 L1144 268" fill="none" stroke="#fdfcfa" stroke-width="5" stroke-linecap="butt"/>
<path d="M1144 268 Q1120 268 1120 280 Q1120 290 1135 292 L1179 307 L1249 307" fill="none" stroke="#fdfcfa" stroke-width="5" stroke-linecap="butt"/>
<path d="M1201 268 L1267 268" fill="none" stroke="#fdfcfa" stroke-width="5" stroke-linecap="butt"/>
<path d="M751 324 L1035 322" fill="none" stroke="#fdfcfa" stroke-width="5" stroke-linecap="butt"/>
<path d="M751 353.5 L958 352.7" fill="none" stroke="#fdfcfa" stroke-width="5" stroke-linecap="butt"/>
<path d="M751 385 L803 385" fill="none" stroke="#fdfcfa" stroke-width="9" stroke-linecap="butt"/>
<path d="M751 415 L802 415" fill="none" stroke="#fdfcfa" stroke-width="5" stroke-linecap="butt"/>
<path d="M751 444 L802 444" fill="none" stroke="#fdfcfa" stroke-width="6" stroke-linecap="butt"/>
<path d="M751 473.5 L802 473.5" fill="none" stroke="#fdfcfa" stroke-width="5" stroke-linecap="butt"/>
<path d="M751 502 L802 502" fill="none" stroke="#fdfcfa" stroke-width="6" stroke-linecap="butt"/>
<path d="M751 531.5 L802 531.5" fill="none" stroke="#fdfcfa" stroke-width="5" stroke-linecap="butt"/>
<path d="M751 559.5 L802 559.5" fill="none" stroke="#fdfcfa" stroke-width="5" stroke-linecap="butt"/>
<path d="M962 442 L1267 441.5" fill="none" stroke="#fdfcfa" stroke-width="6" stroke-linecap="butt"/>
<path d="M1117 412 L1244 412" fill="none" stroke="#fdfcfa" stroke-width="6" stroke-linecap="butt"/>
<path d="M1257 397.5 L1267 397.5" fill="none" stroke="#fdfcfa" stroke-width="5" stroke-linecap="butt"/>
<path d="M1257 412 L1267 412" fill="none" stroke="#fdfcfa" stroke-width="5" stroke-linecap="butt"/>
<path d="M1117 470.5 L1192 470.5" fill="none" stroke="#fdfcfa" stroke-width="6" stroke-linecap="butt"/>
<path d="M1040 499.5 L1267 498.5" fill="none" stroke="#fdfcfa" stroke-width="6" stroke-linecap="butt"/>
<path d="M1040 527 L1267 528" fill="none" stroke="#fdfcfa" stroke-width="5" stroke-linecap="butt"/>
<path d="M811 559.5 L849 559.5" fill="none" stroke="#fdfcfa" stroke-width="6" stroke-linecap="butt"/>
<path d="M898 559.5 L1267 556.5" fill="none" stroke="#fdfcfa" stroke-width="6" stroke-linecap="butt"/>
<path d="M811 606.5 L1267 603" fill="none" stroke="#fdfcfa" stroke-width="8" stroke-linecap="butt"/>
<path d="M1200 638.5 L1267 638.5" fill="none" stroke="#fdfcfa" stroke-width="5" stroke-linecap="butt"/>
<path d="M751 681 L806 681" fill="none" stroke="#fdfcfa" stroke-width="6" stroke-linecap="butt"/>
<path d="M1257 323 L1267 323" fill="none" stroke="#fdfcfa" stroke-width="5" stroke-linecap="butt"/>
<path d="M1257 371 L1267 371" fill="none" stroke="#fdfcfa" stroke-width="5" stroke-linecap="butt"/>
<path d="M802 384.5 L1267 382" fill="none" stroke="#f1c34f" stroke-width="10.5" stroke-linecap="butt"/>
<path d="M806.5 380 L806.5 612" fill="none" stroke="#f1c34f" stroke-width="10.5" stroke-linecap="butt"/>
<path d="M751 607.5 L811 607.5" fill="none" stroke="#f1c34f" stroke-width="10.5" stroke-linecap="butt"/>
<path d="M802 384.5 L1267 382" fill="none" stroke="#fdd76e" stroke-width="9" stroke-linecap="butt"/>
<path d="M806.5 380 L806.5 612" fill="none" stroke="#fdd76e" stroke-width="9" stroke-linecap="butt"/>
<path d="M751 607.5 L811 607.5" fill="none" stroke="#fdd76e" stroke-width="9" stroke-linecap="butt"/>
<path d="M751 711 L806 703" stroke="#8fb3f7" stroke-width="2" fill="none"/>
<path d="M957 689.5 L1267 692" stroke="#8fb3f7" stroke-width="3" fill="none"/>
<path d="M815 703 Q850 697 880 690 Q900 685 920 688 Q940 691 957 689" stroke="#8fb3f7" stroke-width="4.5" fill="none"/>
<path d="M1105 690 L1190 692" stroke="#8fb3f7" stroke-width="4" fill="none"/>
<path d="M760 681 H772 M764 678 L760 681 L764 684 M785 681 H797 M789 678 L785 681 L789 684" stroke="#a9b0c4" stroke-width="1.3" fill="none"/>
<path d="M827 377 Q829 375 832 376 Q837 374 842 376 Q845 375 847 377 L847 385 Q846 390 837 392 Q828 390 827 385 Z" fill="#fff" stroke="#555" stroke-width="1"/>
<text x="837" y="387.5" font-size="8.5" text-anchor="middle" fill="#333">150</text>
<text x="752" y="268" font-size="11" text-anchor="start" fill="#474747" stroke="#fff" stroke-width="2" stroke-opacity="0.9" stroke-linejoin="round" paint-order="stroke">Church St</text>
<text x="899" y="327" font-size="11" text-anchor="start" fill="#474747" stroke="#fff" stroke-width="2" stroke-opacity="0.9" stroke-linejoin="round" paint-order="stroke">W Park St</text>
<text x="1056" y="273.5" font-size="11" text-anchor="start" fill="#474747" stroke="#fff" stroke-width="2" stroke-opacity="0.9" stroke-linejoin="round" paint-order="stroke">W Church St</text>
<text x="1262" y="273.5" font-size="11" text-anchor="start" fill="#474747" stroke="#fff" stroke-width="2" stroke-opacity="0.9" stroke-linejoin="round" paint-order="stroke">W</text>
<text x="1262" y="327" font-size="11" text-anchor="start" fill="#474747" stroke="#fff" stroke-width="2" stroke-opacity="0.9" stroke-linejoin="round" paint-order="stroke">W</text>
<text x="751" y="389.5" font-size="12" text-anchor="start" fill="#474747" stroke="#fff" stroke-width="2" stroke-opacity="0.9" stroke-linejoin="round" paint-order="stroke">sity Ave</text>
<text x="778" y="426" font-size="11" text-anchor="start" fill="#474747" stroke="#fff" stroke-width="2" stroke-opacity="0.9" stroke-linejoin="round" paint-order="stroke">Beckman Institute</text>
<text x="755" y="448.5" font-size="12" text-anchor="start" fill="#474747" stroke="#fff" stroke-width="2" stroke-opacity="0.9" stroke-linejoin="round" paint-order="stroke">Clark St</text>
<text x="753" y="506.5" font-size="12" text-anchor="start" fill="#474747" stroke="#fff" stroke-width="2" stroke-opacity="0.9" stroke-linejoin="round" paint-order="stroke">White St</text>
<text x="751" y="563.5" font-size="12" text-anchor="start" fill="#474747" stroke="#fff" stroke-width="2" stroke-opacity="0.9" stroke-linejoin="round" paint-order="stroke">ighton St</text>
<text x="751" y="580" font-size="11" text-anchor="start" fill="#474747" stroke="#fff" stroke-width="2" stroke-opacity="0.9" stroke-linejoin="round" paint-order="stroke">nce</text>
<text x="751" y="592" font-size="11" text-anchor="start" fill="#474747" stroke="#fff" stroke-width="2" stroke-opacity="0.9" stroke-linejoin="round" paint-order="stroke">rch</text>
<text x="751" y="612" font-size="12" text-anchor="start" fill="#7b5b1f" stroke="#fff" stroke-width="2" stroke-opacity="0.9" stroke-linejoin="round" paint-order="stroke" stroke-opacity="0">ield Ave</text>
<text x="970" y="446.5" font-size="12" text-anchor="start" fill="#474747" stroke="#fff" stroke-width="2" stroke-opacity="0.9" stroke-linejoin="round" paint-order="stroke">W Clark St</text>
<text x="1047" y="503.5" font-size="12" text-anchor="start" fill="#474747" stroke="#fff" stroke-width="2" stroke-opacity="0.9" stroke-linejoin="round" paint-order="stroke">W Main St</text>
<text x="972" y="562.5" font-size="12" text-anchor="start" fill="#474747" stroke="#fff" stroke-width="2" stroke-opacity="0.9" stroke-linejoin="round" paint-order="stroke">W Stoughton St</text>
<text x="818" y="611.5" font-size="12" text-anchor="start" fill="#474747" stroke="#fff" stroke-width="2" stroke-opacity="0.9" stroke-linejoin="round" paint-order="stroke" letter-spacing="0.65">W Springfield Ave</text>
<text x="979" y="609.5" font-size="12" text-anchor="start" fill="#474747" stroke="#fff" stroke-width="2" stroke-opacity="0.9" stroke-linejoin="round" paint-order="stroke" letter-spacing="0.65">W Springfield Ave</text>
<text x="938.5" y="509.5" font-size="11.3" text-anchor="end" fill="#474747" stroke="#fff" stroke-width="2" stroke-opacity="0.9" stroke-linejoin="round" paint-order="stroke">Newmark Civil</text>
<text x="938.5" y="520.5" font-size="11.3" text-anchor="end" fill="#474747" stroke="#fff" stroke-width="2" stroke-opacity="0.9" stroke-linejoin="round" paint-order="stroke">Engineering Laboratory</text>
<text x="995" y="499" font-size="11" text-anchor="middle" fill="#474747" stroke="#fff" stroke-width="2" stroke-opacity="0.9" stroke-linejoin="round" paint-order="stroke">Thomas M.</text>
<text x="995" y="510.5" font-size="11" text-anchor="middle" fill="#474747" stroke="#fff" stroke-width="2" stroke-opacity="0.9" stroke-linejoin="round" paint-order="stroke">Siebel Center</text>
<text x="995" y="521.5" font-size="11" text-anchor="middle" fill="#474747" stroke="#fff" stroke-width="2" stroke-opacity="0.9" stroke-linejoin="round" paint-order="stroke">for Computer</text>
<text x="995" y="532" font-size="11" text-anchor="middle" fill="#474747" stroke="#fff" stroke-width="2" stroke-opacity="0.9" stroke-linejoin="round" paint-order="stroke">Science</text>
<text x="1104" y="704.5" font-size="11.3" text-anchor="middle" fill="#474747" stroke="#fff" stroke-width="2" stroke-opacity="0.9" stroke-linejoin="round" paint-order="stroke">Loomis</text>
<text x="1104" y="715.5" font-size="11.3" text-anchor="middle" fill="#474747" stroke="#fff" stroke-width="2" stroke-opacity="0.9" stroke-linejoin="round" paint-order="stroke">Laboratory</text>
<text x="1104" y="726.5" font-size="11.3" text-anchor="middle" fill="#474747" stroke="#fff" stroke-width="2" stroke-opacity="0.9" stroke-linejoin="round" paint-order="stroke">Of Physics,</text>
<text x="1104" y="737" font-size="11.3" text-anchor="middle" fill="#474747" stroke="#fff" stroke-width="2" stroke-opacity="0.9" stroke-linejoin="round" paint-order="stroke">University</text>
<text x="815" y="375.5" font-size="12" text-anchor="start" fill="#474747" stroke="#fff" stroke-width="2" stroke-opacity="0.9" stroke-linejoin="round" paint-order="stroke" transform="rotate(-90 815 375.5)">N Wright St</text>
<text x="954.5" y="395" font-size="12" text-anchor="start" fill="#474747" stroke="#fff" stroke-width="2" stroke-opacity="0.9" stroke-linejoin="round" paint-order="stroke" transform="rotate(90 954.5 395)">N Mathews Ave</text>
<text x="1032.5" y="395" font-size="12" text-anchor="start" fill="#474747" stroke="#fff" stroke-width="2" stroke-opacity="0.9" stroke-linejoin="round" paint-order="stroke" transform="rotate(90 1032.5 395)">N Goodwin Ave</text>
<text x="1109.5" y="393" font-size="12" text-anchor="start" fill="#474747" stroke="#fff" stroke-width="2" stroke-opacity="0.9" stroke-linejoin="round" paint-order="stroke" transform="rotate(90 1109.5 393)">N Harvey St</text>
<text x="1187" y="393" font-size="12" text-anchor="start" fill="#474747" stroke="#fff" stroke-width="2" stroke-opacity="0.9" stroke-linejoin="round" paint-order="stroke" transform="rotate(90 1187 393)">N Gregory St</text>
<text x="1249" y="393" font-size="12" text-anchor="start" fill="#474747" stroke="#fff" stroke-width="2" stroke-opacity="0.9" stroke-linejoin="round" paint-order="stroke" transform="rotate(90 1249 393)">N Lincoln Ave</text>
<text x="802" y="462" font-size="12" text-anchor="start" fill="#7b5b1f" stroke="#fff" stroke-width="2" stroke-opacity="0.9" stroke-linejoin="round" paint-order="stroke" transform="rotate(90 802 462)" stroke-opacity="0">S Wright St</text>
<text x="805" y="617" font-size="12" text-anchor="start" fill="#474747" stroke="#fff" stroke-width="2" stroke-opacity="0.9" stroke-linejoin="round" paint-order="stroke" transform="rotate(90 805 617)">S Wright St</text>
<text x="1036" y="614" font-size="12" text-anchor="start" fill="#474747" stroke="#fff" stroke-width="2" stroke-opacity="0.9" stroke-linejoin="round" paint-order="stroke" transform="rotate(90 1036 614)">S Goodwin Ave</text>
<text x="1191" y="612" font-size="12" text-anchor="start" fill="#474747" stroke="#fff" stroke-width="2" stroke-opacity="0.9" stroke-linejoin="round" paint-order="stroke" transform="rotate(90 1191 612)">S Gregory St</text>
<text x="1252" y="648" font-size="12" text-anchor="start" fill="#474747" stroke="#fff" stroke-width="2" stroke-opacity="0.9" stroke-linejoin="round" paint-order="stroke" transform="rotate(90 1252 648)" opacity="0.45">S Lincoln Ave</text>
<path id="ck" d="M836 705 Q893 682 945 700" fill="none"/>
<text font-size="14" fill="#3f5e93" stroke="#3f5e93" stroke-width="0.3"><textPath href="#ck">Boneyard <tspan font-style="italic">Creek</tspan></textPath></text>
<circle cx="875.5" cy="422" r="6.5" fill="#fff" opacity="0.95"/><path d="M870 421 L875.5 418.5 L881 421 L875.5 423.5 Z M872 422 V424.5 Q875.5 426.5 879 424.5 V422" fill="#7b5b4b"/>
<circle cx="995" cy="541" r="6.5" fill="#fff" opacity="0.95"/><path d="M989.5 540 L995 537.5 L1000.5 540 L995 542.5 Z M991.5 541 V543.5 Q995 545.5 998.5 543.5 V541" fill="#7b5b4b"/>
<circle cx="1067" cy="718" r="6.5" fill="#fff" opacity="0.95"/><path d="M1061.5 717 L1067 714.5 L1072.5 717 L1067 719.5 Z M1063.5 718 V720.5 Q1067 722.5 1070.5 720.5 V718" fill="#7b5b4b"/>
<circle cx="922.5" cy="531.5" r="6.5" fill="#fff" opacity="0.95"/><rect x="919.5" y="528.5" width="6" height="6" fill="#7b5b4b"/>
<circle cx="772" cy="585" r="6.5" fill="#fff" opacity="0.95"/><path d="M768 589 V584 L769.5 582 L771 584 V589 Z M771.5 589 V581 L772.5 579 L773.5 581 V589 Z M774 589 V584 L775.5 582 L777 584 V589 Z" fill="#7b5b4b"/>
<defs><linearGradient id="mk" x1="0" y1="0" x2="0" y2="1"><stop offset="0" stop-color="#f57a6c"/><stop offset="0.5" stop-color="#e9493b"/><stop offset="1" stop-color="#d2352b"/></linearGradient></defs>
<path d="M1009 515 C1007 505 998 498 998 487 A11 11 0 1 1 1020 487 C1020 498 1011 505 1009 515 Z" fill="url(#mk)" stroke="#b5372d" stroke-width="0.7"/>
<circle cx="1009" cy="487" r="3.6" fill="#5c0f0c"/>
<rect x="761" y="276" width="93" height="31" rx="2" fill="#fff" stroke="#d5d5d5" stroke-width="0.5"/>
<line x1="798.5" y1="276" x2="798.5" y2="307" stroke="#e6e6e6" stroke-width="1"/>
<text x="769.5" y="295" font-size="11.3" fill="#000" stroke="#000" stroke-width="0.45">Map</text>
<text x="807" y="295" font-size="11.3" fill="#565656">Satellite</text>
<rect x="1229" y="649" width="27" height="28" rx="2" fill="#fff"/>
<g transform="translate(0 2)"><circle cx="1243" cy="653" r="3.3" fill="#f7b81c" stroke="#d99a0a" stroke-width="0.5"/><path d="M1240 657.5 H1246 L1249.5 665 L1248 665.5 L1246.5 662.5 V671 H1243.6 V665.5 H1242.4 V671 H1239.5 V662.5 L1238 665.5 L1236.5 665 Z" fill="#f7b81c" stroke="#d99a0a" stroke-width="0.5"/><path d="M1241.5 657.5 L1243 660 L1244.5 657.5" fill="#e8782a"/></g>
<rect x="1229" y="687.5" width="27" height="60" rx="2" fill="#fff"/>
<line x1="1233" y1="714.5" x2="1252" y2="714.5" stroke="#e6e6e6" stroke-width="1"/>
<path d="M1238 700.5 H1249 M1243.5 695 V706" stroke="#666" stroke-width="2.4"/>
<path d="M1238.5 728.5 H1248.5" stroke="#666" stroke-width="2.4"/>
</svg>
</div>
 </div>
</div>

<div id="winbot" class="abs"></div>
<!-- DOCK -->
<svg class="abs" style="left:0;top:737px" width="1280" height="63" viewBox="0 737 1280 63" font-family="Liberation Sans, sans-serif">
<defs>
<linearGradient id="dk" x1="0" y1="0" x2="0" y2="1"><stop offset="0" stop-color="#707386"/><stop offset="1" stop-color="#80849a"/></linearGradient>
<radialGradient id="dkr" cx="0.55" cy="1" r="0.5" gradientTransform="translate(0.275 0) scale(0.5 1)"><stop offset="0" stop-color="#9599b3" stop-opacity="0.55"/><stop offset="1" stop-color="#9599b3" stop-opacity="0"/></radialGradient>
<linearGradient id="fnL" x1="0" y1="0" x2="0" y2="1"><stop offset="0" stop-color="#22b5f8"/><stop offset="1" stop-color="#1a6fe6"/></linearGradient>
<linearGradient id="fnR" x1="0" y1="0" x2="0" y2="1"><stop offset="0" stop-color="#f4f6f8"/><stop offset="1" stop-color="#dde4ea"/></linearGradient>
<linearGradient id="lp" x1="0" y1="0" x2="0" y2="1"><stop offset="0" stop-color="#c4c7cb"/><stop offset="1" stop-color="#5c6166"/></linearGradient>
<linearGradient id="msg" x1="0" y1="0" x2="0" y2="1"><stop offset="0" stop-color="#5ac8fa"/><stop offset="1" stop-color="#1877e6"/></linearGradient>
<linearGradient id="ft" x1="0" y1="0" x2="0" y2="1"><stop offset="0" stop-color="#5be36a"/><stop offset="1" stop-color="#13c032"/></linearGradient>
<linearGradient id="it" x1="0" y1="0" x2="0" y2="1"><stop offset="0" stop-color="#fc5b6c"/><stop offset="1" stop-color="#e0152e"/></linearGradient>
<linearGradient id="as" x1="0" y1="0" x2="0" y2="1"><stop offset="0" stop-color="#3cbef8"/><stop offset="1" stop-color="#1466e2"/></linearGradient>
<linearGradient id="ib" x1="0" y1="0" x2="0" y2="1"><stop offset="0" stop-color="#fdab3c"/><stop offset="1" stop-color="#f56a18"/></linearGradient>
<linearGradient id="sp" x1="0" y1="0" x2="0" y2="1"><stop offset="0" stop-color="#c9cfd4"/><stop offset="1" stop-color="#7d8388"/></linearGradient>
<linearGradient id="sub" x1="0" y1="0" x2="0" y2="1"><stop offset="0" stop-color="#5a5a5a"/><stop offset="1" stop-color="#2e2e2e"/></linearGradient>
<linearGradient id="sf" x1="0" y1="0" x2="0" y2="1"><stop offset="0" stop-color="#1ad6fd"/><stop offset="1" stop-color="#1d62f0"/></linearGradient>
<linearGradient id="vlc" x1="0" y1="0" x2="0" y2="1"><stop offset="0" stop-color="#fb9a2a"/><stop offset="1" stop-color="#e46a0e"/></linearGradient>
<linearGradient id="tr" x1="0" y1="0" x2="0" y2="1"><stop offset="0" stop-color="#f2f3f4"/><stop offset="1" stop-color="#d6d8da"/></linearGradient>
<clipPath id="lcd"><circle cx="1163.5" cy="769.5" r="17"/></clipPath>
</defs>
<defs><filter id="bl" x="-50%" y="-50%" width="200%" height="200%"><feGaussianBlur stdDeviation="2.5"/></filter></defs>
<rect x="0" y="739" width="40" height="61" fill="#393d47"/>
<g filter="url(#bl)"><path d="M-5 742 Q8 745 9 760 Q10 775 2 790 L-5 790 Z" fill="#9b9893"/>
<path d="M0 770 Q15 776 25 772 Q35 770 42 778 L40 788 Q25 784 10 790 L0 795 Z" fill="#77767a"/>
<path d="M12 742 Q22 752 28 770 L20 772 Q16 758 10 748 Z" fill="#5b5c63"/>
<path d="M5 792 Q20 788 36 796 L36 800 L5 800 Z" fill="#5e6068"/></g>
<rect x="1240" y="739" width="40" height="61" fill="#232833"/>
<g filter="url(#bl)"><path d="M1244 742 Q1255 750 1262 770 Q1258 778 1250 770 Q1246 760 1242 750 Z" fill="#77777a"/>
<path d="M1262 746 Q1275 755 1282 772 L1282 746 Z" fill="#4c505a"/>
<path d="M1246 785 Q1262 776 1282 782 L1282 792 Q1262 788 1246 795 Z" fill="#464a55"/></g>
<path d="M40 800 V744 Q40 739 45 739 H1235 Q1240 739 1240 744 V800 Z" fill="url(#dk)"/>
<path d="M40 800 V744 Q40 739 45 739 H1235 Q1240 739 1240 744 V800 Z" fill="url(#dkr)"/>
<line x1="45" y1="739.5" x2="1235" y2="739.5" stroke="#8a8c98" stroke-width="1" opacity="0.6"/>
<rect x="49" y="749.5" width="37" height="36" rx="2" fill="url(#fnR)"/>
<path d="M51 749.5 H68.5 Q63 760 63.5 770 H68 Q67.5 778 70 785.5 H51 Q49 785.5 49 783.5 V751.5 Q49 749.5 51 749.5 Z" fill="url(#fnL)"/>
<path d="M59 756.5 V761 M76 756.5 V761" stroke="#111" stroke-width="1.3"/>
<path d="M56 770 Q67 781 79 770" fill="none" stroke="#111" stroke-width="1.4"/>
<circle cx="116.5" cy="767.3" r="19.5" fill="url(#lp)" stroke="#d8dadc" stroke-width="1"/>
<path d="M128 755 Q120 756 114 762 L108 768 L103 768 L100 772 L106 772 L110 776 L110 781 L114 778 L114 773 L120 767 Q126 761 128 755 Z" fill="#3e4145"/>
<circle cx="120.5" cy="763" r="1.6" fill="#aaa"/>
<circle cx="165.5" cy="767.5" r="19.5" fill="#fccf3c"/>
<path d="M165.5 767.5 L148.6 757.75 A19.5 19.5 0 0 1 182.4 757.75 Z" fill="#e03a30"/>
<path d="M165.5 767.5 L148.6 757.75 A19.5 19.5 0 0 0 165.5 787 Z" fill="#3bab4a"/>
<path d="M148.6 757.75 L165.5 767.5 L182.4 757.75 Z" fill="#e03a30"/>
<path d="M156 762 L165.5 767.5 L165.5 787 A19.5 19.5 0 0 1 160 786.2 Z" fill="#3bab4a"/>
<circle cx="165.5" cy="767.5" r="8.2" fill="#fff"/><circle cx="165.5" cy="767.5" r="6.6" fill="#3a83dc"/>
<g transform="rotate(-4 213 767)"><rect x="196.5" y="749" width="34" height="36" fill="#5d6570"/><rect x="196" y="748" width="34" height="35" fill="#fdfdfd"/><rect x="196" y="748" width="34" height="10" fill="#f0493e"/><text x="213" y="756.5" font-size="7.5" fill="#fff" text-anchor="middle" font-weight="bold">FEB</text><text x="213" y="779" font-size="19" fill="#222" text-anchor="middle">21</text></g>
<g transform="rotate(-4 262 767)"><rect x="245" y="748" width="34" height="38" fill="#fbf6d8" stroke="#c6b873" stroke-width="0.6"/><rect x="245" y="748" width="34" height="6" fill="#f7cf46"/>
<line x1="246" y1="758.0" x2="278" y2="758.0" stroke="#d9d1aa" stroke-width="0.6"/>
<line x1="246" y1="761.2" x2="278" y2="761.2" stroke="#d9d1aa" stroke-width="0.6"/>
<line x1="246" y1="764.4" x2="278" y2="764.4" stroke="#d9d1aa" stroke-width="0.6"/>
<line x1="246" y1="767.6" x2="278" y2="767.6" stroke="#d9d1aa" stroke-width="0.6"/>
<line x1="246" y1="770.8" x2="278" y2="770.8" stroke="#d9d1aa" stroke-width="0.6"/>
<line x1="246" y1="774.0" x2="278" y2="774.0" stroke="#d9d1aa" stroke-width="0.6"/>
<line x1="246" y1="777.2" x2="278" y2="777.2" stroke="#d9d1aa" stroke-width="0.6"/>
<line x1="246" y1="780.4" x2="278" y2="780.4" stroke="#d9d1aa" stroke-width="0.6"/>
<line x1="246" y1="783.6" x2="278" y2="783.6" stroke="#d9d1aa" stroke-width="0.6"/>
</g>
<g transform="rotate(-6 308 766)"><rect x="293" y="749" width="32" height="36" fill="#f4f1e6" stroke="#bbb" stroke-width="0.6"/><rect x="295" y="752" width="13" height="3" fill="#6dbe5f"/><rect x="308" y="752" width="14" height="3" fill="#f0a8b8"/><path d="M295 770 L305 762 L323 772 L323 783 L295 783 Z" fill="#f7e18a"/><rect x="300" y="761" width="10" height="5" fill="#4a7fd4"/></g>
<circle cx="320" cy="775" r="9" fill="#f2f2f2" stroke="#999" stroke-width="0.8"/><text x="320" y="778" font-size="7" text-anchor="middle" fill="#555">3D</text>
<path d="M360 748 C371 748 379 754 379 762.5 C379 771 371 777 360 777 C357 777 354 776.5 351.5 775.5 L344.5 780 L346.5 773 C342.5 770 341 766.5 341 762.5 C341 754 349 748 360 748 Z" fill="url(#msg)"/>
<path d="M368 765 C375 765 380 769 380 774 C380 777 378 779 376 781 L377 785 L373 783 C371.5 783.5 370 784 368 784 C361 784 356 780 356 774.5 C356 769 361 765 368 765 Z" fill="#f4f7fb"/>
<circle cx="362.5" cy="774.5" r="1.4" fill="#1e63c8"/><circle cx="368" cy="774.5" r="1.4" fill="#1e63c8"/><circle cx="373.5" cy="774.5" r="1.4" fill="#1e63c8"/>
<rect x="390" y="750" width="36" height="32" rx="5" fill="url(#ft)"/>
<rect x="395.5" y="759" width="18" height="14" rx="1.5" fill="#e8efe9"/><path d="M414 762 L420 759 L420 773 L414 770 Z" fill="#e8efe9"/>
<circle cx="419.5" cy="777" r="10" fill="#f4f6f4" stroke="#bfc9c1" stroke-width="0.6"/><path d="M415.5 772 Q414 777 419 781.5 Q423 783.5 424.5 781 L422.5 779 L420.5 780 Q417.5 777.5 417.5 775 L418.5 773.5 Z" fill="#19b83a"/>
<circle cx="458" cy="767.5" r="19.5" fill="#f5f5f5" stroke="#cfcfcf" stroke-width="0.6"/>
<ellipse cx="458" cy="760" rx="4.6" ry="8" fill="#f4b23a" opacity="0.88" transform="rotate(0 458 767.5)"/>
<ellipse cx="458" cy="760" rx="4.6" ry="8" fill="#f0e33a" opacity="0.88" transform="rotate(45 458 767.5)"/>
<ellipse cx="458" cy="760" rx="4.6" ry="8" fill="#9bd24a" opacity="0.88" transform="rotate(90 458 767.5)"/>
<ellipse cx="458" cy="760" rx="4.6" ry="8" fill="#5cc3a0" opacity="0.88" transform="rotate(135 458 767.5)"/>
<ellipse cx="458" cy="760" rx="4.6" ry="8" fill="#4a9ff0" opacity="0.88" transform="rotate(180 458 767.5)"/>
<ellipse cx="458" cy="760" rx="4.6" ry="8" fill="#7e76d8" opacity="0.88" transform="rotate(225 458 767.5)"/>
<ellipse cx="458" cy="760" rx="4.6" ry="8" fill="#c761c6" opacity="0.88" transform="rotate(270 458 767.5)"/>
<ellipse cx="458" cy="760" rx="4.6" ry="8" fill="#f05f6e" opacity="0.88" transform="rotate(315 458 767.5)"/>
<g transform="rotate(-8 504 767)"><rect x="489" y="749" width="30" height="38" fill="#f8f8f8" stroke="#bbb" stroke-width="0.6"/><rect x="489" y="749" width="30" height="8" fill="#f08a28"/><text x="497" y="755.5" font-size="4.5" fill="#fff">PAGES</text><rect x="492" y="760" width="14" height="9" fill="#2c8ce0"/><path d="M495 762 L499 767 L503 762 Z" fill="#f39a3c"/>
<line x1="492" y1="772.0" x2="515" y2="772.0" stroke="#cfcfcf" stroke-width="0.7"/>
<line x1="492" y1="774.3" x2="515" y2="774.3" stroke="#cfcfcf" stroke-width="0.7"/>
<line x1="492" y1="776.6" x2="515" y2="776.6" stroke="#cfcfcf" stroke-width="0.7"/>
<line x1="492" y1="778.9" x2="515" y2="778.9" stroke="#cfcfcf" stroke-width="0.7"/>
<line x1="492" y1="781.2" x2="515" y2="781.2" stroke="#cfcfcf" stroke-width="0.7"/>
<line x1="492" y1="783.5" x2="515" y2="783.5" stroke="#cfcfcf" stroke-width="0.7"/>
</g><path d="M521 748 L513 784 L511.5 787 L512 783 L519 748 Z" fill="#c96a1e" stroke="#8a4513" stroke-width="0.4"/>
<path d="M537 778 H573 L575 787 H535 Z" fill="#f2f2f2" stroke="#c9c9c9" stroke-width="0.6"/>
<rect x="541" y="767" width="6.5" height="14" fill="#e44858"/><rect x="549.5" y="761" width="6.5" height="20" fill="#f4933a"/><rect x="558" y="749" width="6.5" height="32" fill="#3ec056"/><rect x="566.5" y="755" width="6.5" height="26" fill="#2e9ef0"/>
<path d="M587 750 H621 L623 764 H585 Z" fill="#2a8cf0" stroke="#1a5fb5" stroke-width="0.6"/><rect x="593" y="752" width="22" height="9" fill="#f4f8fc"/>
<circle cx="600" cy="756.5" r="3" fill="#f2a33a"/><path d="M600 756.5 V753.5 A3 3 0 0 1 603 756.5 Z" fill="#4aa0e8"/>
<rect x="602.5" y="764" width="3" height="19" fill="#c8ccd2"/><ellipse cx="604" cy="784.5" rx="8" ry="2.5" fill="#d5d9de" stroke="#9aa" stroke-width="0.5"/>
<circle cx="653" cy="767.5" r="19.5" fill="url(#it)" stroke="#f7f7f7" stroke-width="1.2"/>
<path d="M647 777 V760 L661 757 V773" fill="none" stroke="#fff" stroke-width="2.4"/><ellipse cx="644.5" cy="777.5" rx="3.5" ry="2.8" fill="#fff"/><ellipse cx="658.5" cy="774" rx="3.5" ry="2.8" fill="#fff"/>
<circle cx="702.5" cy="767.5" r="19.5" fill="url(#as)" stroke="#f3f3f3" stroke-width="1.2"/>
<path d="M702.5 755 L692.5 780 M702.5 755 L712.5 780 M690 770.5 H715" stroke="#fff" stroke-width="2.4" stroke-linecap="round"/>
<circle cx="717.5" cy="752.5" r="8" fill="#e8333b"/><text x="717.5" y="756" font-size="9" fill="#fff" text-anchor="middle">8</text>
<circle cx="751" cy="767.5" r="19.5" fill="url(#ib)" stroke="#f3f3f3" stroke-width="1.2"/>
<path d="M739 760 Q745 757 750 760 V777 Q745 775 739 777 Z M752 760 Q757 757 763 760 V777 Q757 775 752 777 Z" fill="#fff"/>
<rect x="781" y="749" width="38" height="36" rx="1.5" fill="url(#sp)" stroke="#8d9398" stroke-width="0.6"/>
<circle cx="800" cy="767" r="15.5" fill="#3c3f42"/><circle cx="800" cy="767" r="13" fill="none" stroke="#9fa3a6" stroke-width="2.5" stroke-dasharray="1.6 1.6"/><circle cx="800" cy="767" r="10" fill="#5d6165" stroke="#aaa" stroke-width="0.8"/>
<path d="M800 767 V757.5 M800 767 L808 772 M800 767 L792 772" stroke="#c9cdd0" stroke-width="2.6"/><circle cx="800" cy="767" r="2.5" fill="#c9cdd0"/>
<path d="M828.5 781 H867.5 L868 785 Q868 786 866.5 786 H829.5 Q828 786 828 785 Z" fill="#ececec"/>
<path d="M831 749.5 Q831 748 833 748 H863 Q865 748 865.5 749.5 L867.5 781 H828.5 Z" fill="url(#sub)"/>
<path d="M829 779 H867 L867.5 781 H828.5 Z" fill="#222"/>
<text x="848" y="774" font-size="24" font-weight="bold" fill="#f7892b" text-anchor="middle" stroke="#f7892b" stroke-width="0.5" opacity="0.95">S</text>
<path d="M887.5 760.5 Q887.5 750 897.5 750 Q908.0 750 908.0 760 Q908.0 765 901.5 769 Q897.5 772 897.5 776 V777" fill="none" stroke="#cfd0d6" stroke-width="2.6"/>
<rect x="896.1" y="780.5" width="2.8" height="4" fill="#cfd0d6"/>
<path d="M936.5 760.5 Q936.5 750 946.5 750 Q957.0 750 957.0 760 Q957.0 765 950.5 769 Q946.5 772 946.5 776 V777" fill="none" stroke="#cfd0d6" stroke-width="2.6"/>
<rect x="945.1" y="780.5" width="2.8" height="4" fill="#cfd0d6"/>
<rect x="976" y="749.5" width="38" height="35" rx="1.5" fill="#1e1e1e" stroke="#9a9a9a" stroke-width="1"/>
<text x="980" y="762.5" font-size="10" font-weight="bold" fill="#f4f4f4" font-family="Liberation Mono">&gt;_</text>
<path d="M1026 784 L1030 778 H1058 L1062 784 Q1062 787 1060 787 H1028 Q1026 787 1026 784 Z" fill="url(#vlc)"/>
<path d="M1040 746 H1048 L1058 779 H1030 Z" fill="url(#vlc)"/>
<path d="M1037.5 755 H1050.5 L1053 764 H1035 Z M1033.5 768 H1054.5 L1056.5 775 H1031.5 Z" fill="#e8e8e8"/>
<circle cx="1093" cy="767.5" r="19.5" fill="#f2f2f2" stroke="#cfcfcf" stroke-width="0.6"/><circle cx="1093" cy="767.5" r="17" fill="url(#sf)"/>
<circle cx="1093" cy="767.5" r="14" fill="none" stroke="#fff" stroke-width="1.5" stroke-dasharray="0.8 2.2" opacity="0.8"/>
<path d="M1105 755 L1095 769.5 L1091 765.5 Z" fill="#f23a3a"/><path d="M1081 780 L1091 765.5 L1095 769.5 Z" fill="#f5f5f5"/>
<line x1="1128.5" y1="747" x2="1128.5" y2="792" stroke="#3d4050" stroke-width="1"/>
<path d="M1148 748 Q1148 745.5 1151 745.5 H1163 Q1167 745.5 1170 749 H1178 V752 H1148 Z" fill="#f2f2f2"/>
<rect x="1145" y="751" width="37" height="36.5" fill="#fafafa" stroke="#e0e0e0" stroke-width="0.6"/>
<circle cx="1163.5" cy="769.5" r="17" fill="#fdb65a"/><g clip-path="url(#lcd)"><path d="M1168 762 L1190 780 L1190 800 L1150 800 L1150 780 Z" fill="#fa9d4b"/></g>
<g transform="translate(1163.5 769.5) scale(0.85) translate(-25 -21.7)"><rect x="12.6" y="11" width="15" height="1.6" fill="#e8553a"/><path d="M13.5 12.5 L27.5 12.5 L27.5 21 L12 21 Z" fill="#2a1c1c"/><path d="M14.3 12.8 H19.3 V19.8 H13.6 Z" fill="#3fb6ae"/><path d="M20.8 12.8 H26.4 V20.5 H20.8 Z" fill="#3aa9a2"/><rect x="29.8" y="10.7" width="1.4" height="8.5" fill="#e8553a"/><rect x="33" y="14.9" width="1.4" height="4" fill="#6b6b6b"/><path d="M26.5 19 H37 C40 19 41.5 21.5 41.5 25.6 H26.5 Z" fill="#2b1c1c"/><path d="M8.8 23 L12.6 23 L12.6 30.5 L10 30.5 Z" fill="#26566a"/><path d="M22 25.5 H38 V28.6 H22 Z" fill="#25566a"/><rect x="25" y="25.9" width="5.8" height="4.6" fill="#e8553a"/><path d="M11 25.5 C11 21.5 14 20 18 20 C22 20 24.8 22 24.8 25.5 Z" fill="#e05a3a"/><circle cx="17.6" cy="28.3" r="5.3" fill="#2a1c1c"/><circle cx="17.6" cy="28.3" r="3.3" fill="#d9503a"/><circle cx="36.6" cy="30" r="4.3" fill="#2a1c1c"/><circle cx="36.6" cy="30" r="2.7" fill="#d9503a"/></g>
<path d="M1197 751 L1201 784 Q1202 788 1212 788 Q1222 788 1223 784 L1227 751 Z" fill="url(#tr)" opacity="0.95"/>
<ellipse cx="1212" cy="751" rx="15.5" ry="4" fill="#e6e7e8" stroke="#c8c9ca" stroke-width="0.6"/>
<path d="M1201 750 L1205 745 L1209 749 L1213 744.5 L1217 749 L1221 745.5 L1224 750 Z" fill="#5a5a66"/><path d="M1205 749 L1208 746 L1210 750 Z" fill="#6ad" /><path d="M1215 748 L1219 746 L1219 750 Z" fill="#c44"/>
<circle cx="67" cy="795.5" r="2" fill="#111"/>
<circle cx="165" cy="795.5" r="2" fill="#111"/>
<circle cx="653" cy="795.5" r="2" fill="#111"/>
<circle cx="848" cy="795.5" r="2" fill="#111"/>
<circle cx="995" cy="795.5" r="2" fill="#111"/>
<circle cx="1044" cy="795.5" r="2" fill="#111"/>
<circle cx="1093" cy="795.5" r="2" fill="#111"/>
<rect x="94" y="793.5" width="45" height="4" rx="2" fill="#777" stroke="#111" stroke-width="1"/>
</svg>
</body></html>
